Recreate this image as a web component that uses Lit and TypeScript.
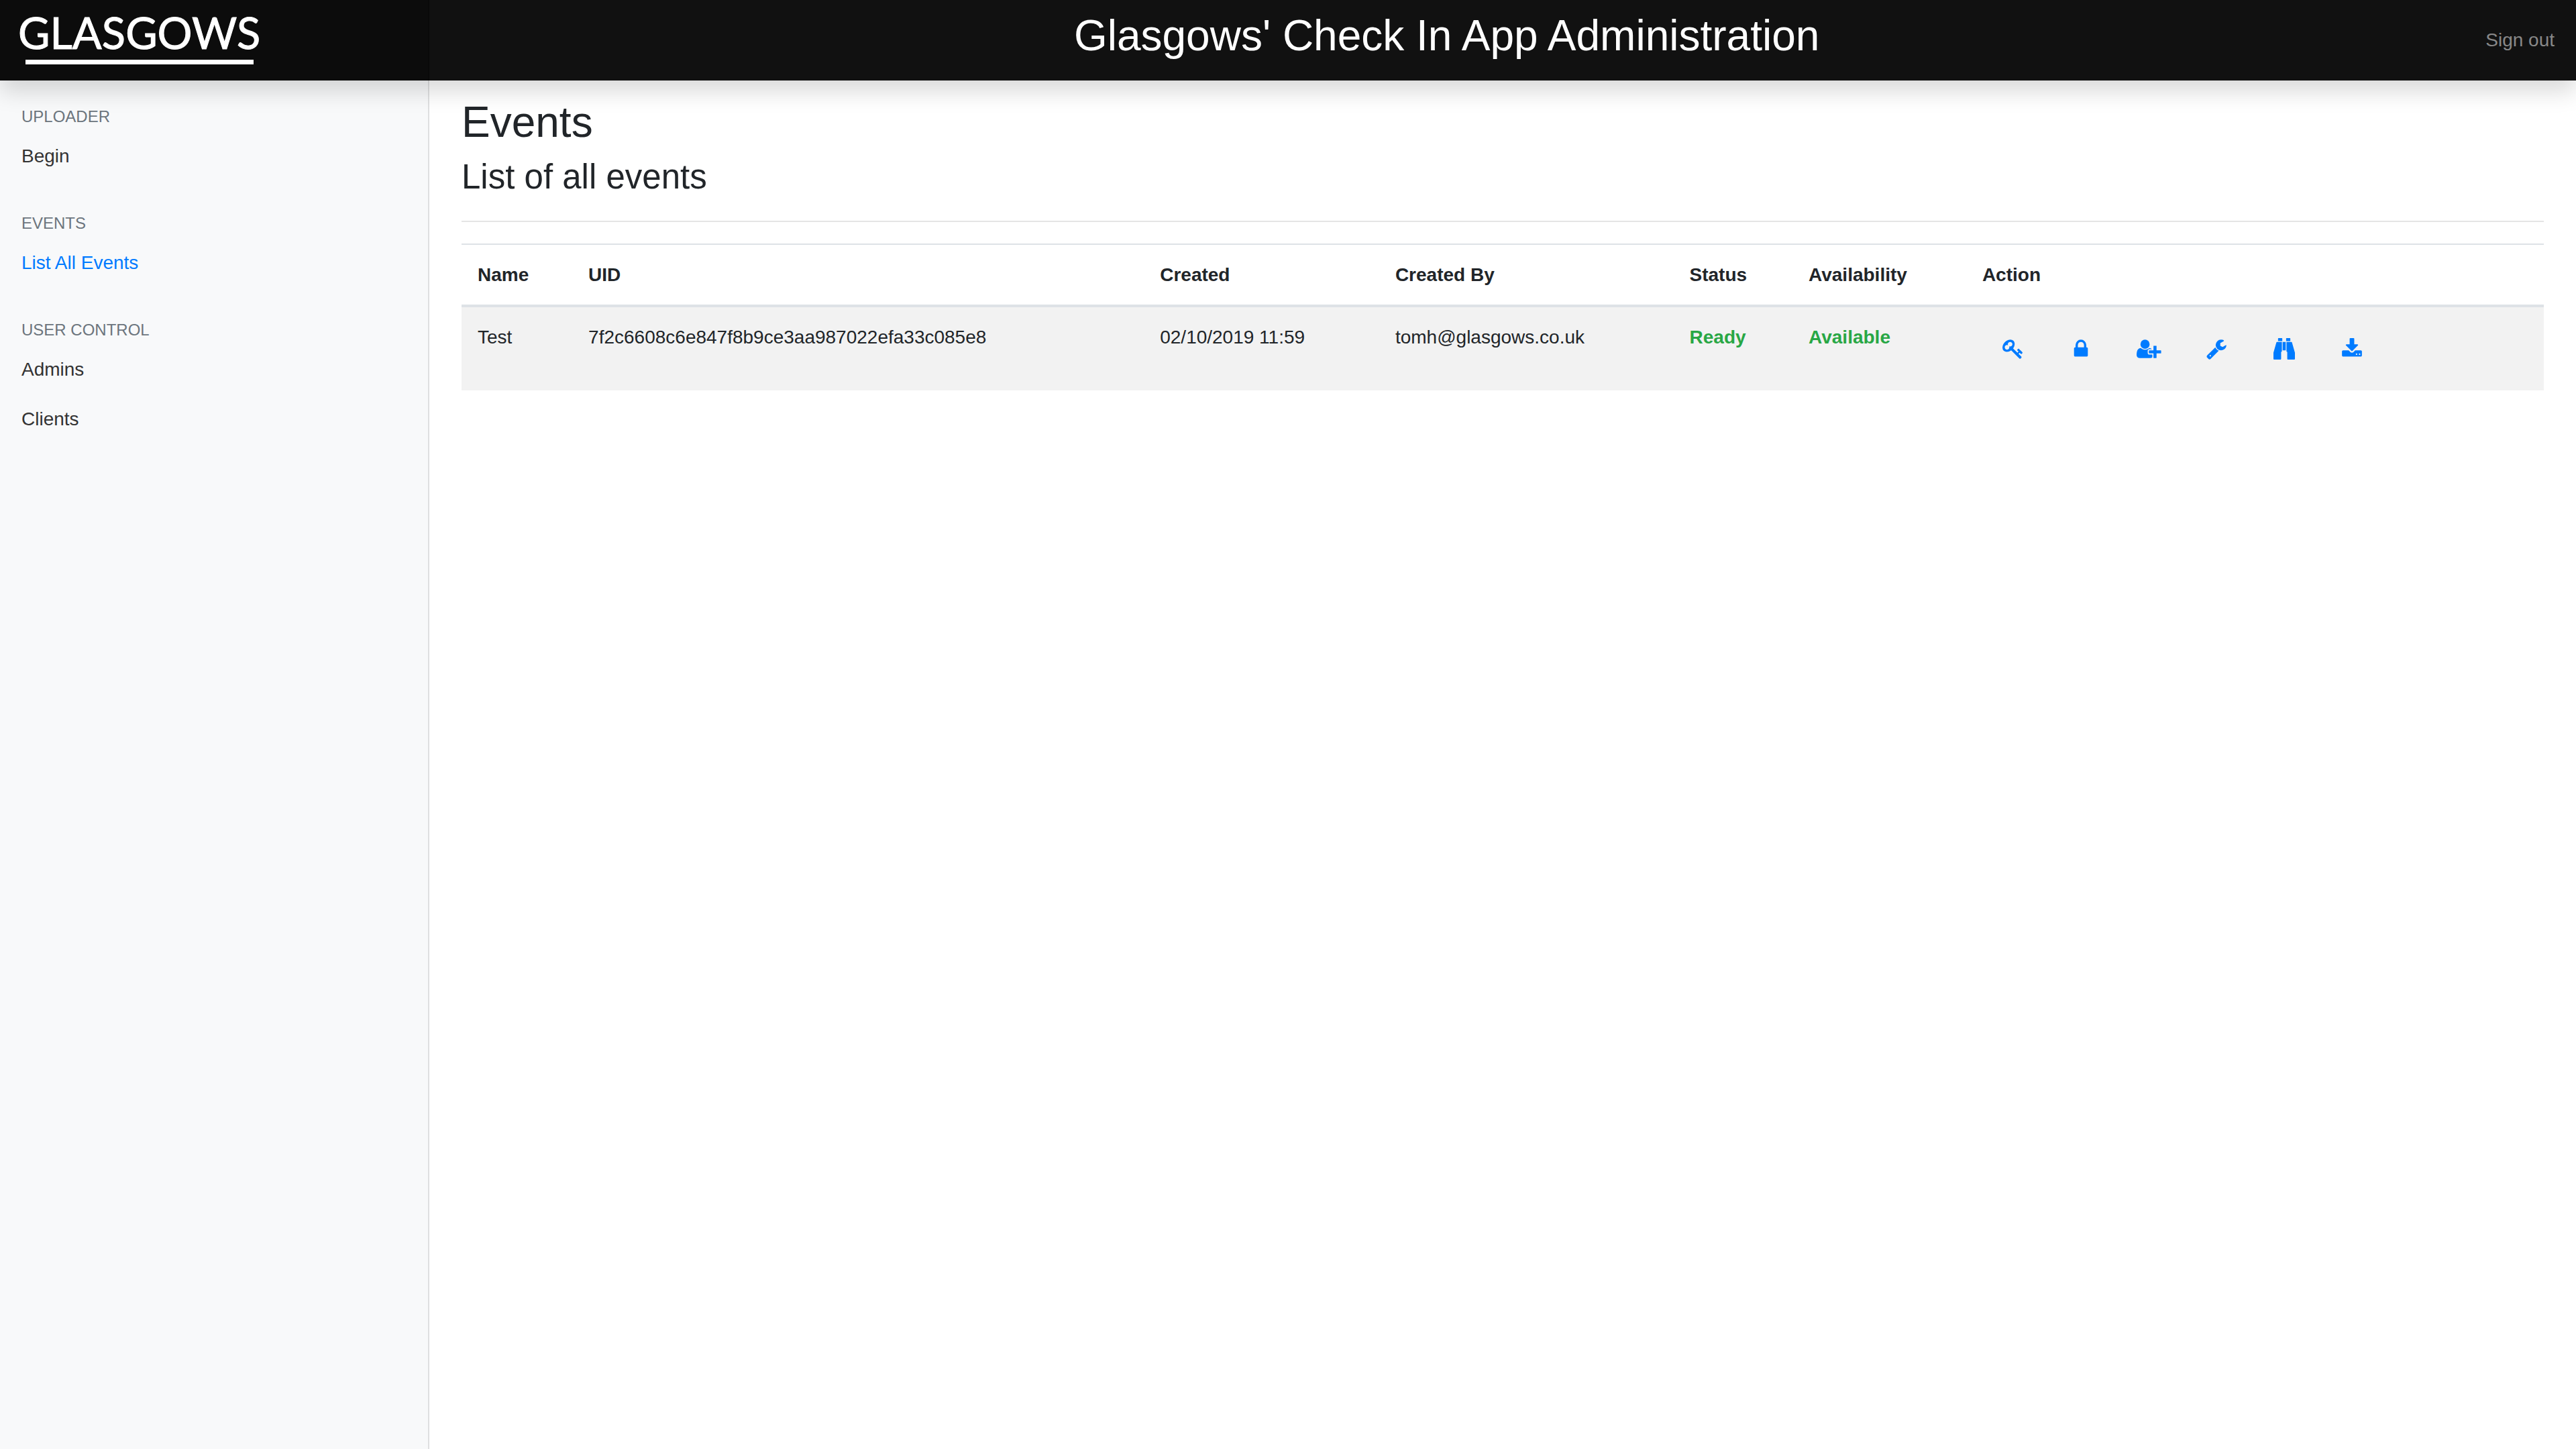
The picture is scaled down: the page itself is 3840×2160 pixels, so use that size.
import { LitElement, html, css, svg } from "lit";
import { customElement } from "lit/decorators.js";

interface NavLink { label: string; active?: boolean; }
interface NavGroup { title: string; links: NavLink[]; }
interface Action { label: string; width: number; path: string; }
interface EventRow {
  name: string; uid: string; created: string; createdBy: string; status: string; availability: string;
}

const NAV: NavGroup[] = [
  { title: "Uploader", links: [{ label: "Begin" }] },
  { title: "Events", links: [{ label: "List All Events", active: true }] },
  { title: "User Control", links: [{ label: "Admins" }, { label: "Clients" }] },
];

const COLUMNS = ["Name", "UID", "Created", "Created By", "Status", "Availability", "Action"];

const EVENTS: EventRow[] = [
  {
    name: "Test",
    uid: "7f2c6608c6e847f8b9ce3aa987022efa33c085e8",
    created: "02/10/2019 11:59",
    createdBy: "tomh@glasgows.co.uk",
    status: "Ready",
    availability: "Available",
  },
];

const ACTIONS: Action[] = [
  {
    label: "Key", width: 1792,
    path: "M832 512q0-80-56-136t-136-56-136 56-56 136q0 42 19 83-41-19-83-19-80 0-136 56t-56 136 56 136 136 56 136-56 56-136q0-42-19-83 41 19 83 19 80 0 136-56t56-136zm851 704q0 17-49 66t-66 49q-9 0-28.5-16t-36.5-33-38.5-40-24.5-26l-96 96 220 220q28 28 28 68 0 42-39 81t-81 39q-40 0-68-28l-671-671q-176 131-365 131-163 0-265.5-102.5t-102.5-265.5q0-160 95-313t248-248 313-95q163 0 265.5 102.5t102.5 265.5q0 189-131 365l355 355 96-96q-3-3-26-24.5t-40-38.5-33-36.5-16-28.5q0-17 49-66t66-49q13 0 23 10 6 6 46 44.5t82 79.5 86.5 86 73 78 28.5 41z",
  },
  {
    label: "Lock", width: 1792,
    path: "M640 768h512v-192q0-106-75-181t-181-75-181 75-75 181v192zm832 96v576q0 40-28 68t-68 28h-960q-40 0-68-28t-28-68v-576q0-40 28-68t68-28h32v-192q0-184 132-316t316-132 316 132 132 316v192h32q40 0 68 28t28 68z",
  },
  {
    label: "Add user", width: 2048,
    path: "M704 896q-159 0-271.500-112.500t-112.500-271.500 112.500-271.500 271.500-112.500 271.500 112.500 112.500 271.500-112.500 271.500-271.500 112.500zm960 128h352q13 0 22.500 9.500t9.500 22.500v192q0 13-9.500 22.500t-22.500 9.500h-352v352q0 13-9.500 22.500t-22.500 9.500h-192q-13 0-22.500-9.500t-9.500-22.500v-352h-352q-13 0-22.500-9.500t-9.500-22.500v-192q0-13 9.500-22.500t22.500-9.500h352v-352q0-13 9.500-22.500t22.500-9.500h192q13 0 22.500 9.500t9.500 22.500v352zm-736 224q0 52 38 90t90 38h256v238q-68 50-171 50h-874q-121 0-194-69t-73-190q0-53 3.500-103.500t14-109 26.500-108.500 43-97.500 62-81 85.500-53.500 111.500-20q19 0 39 17 79 61 154.500 91.500t164.500 30.500 164.500-30.500 154.500-91.500q20-17 39-17 132 0 217 96h-223q-52 0-90 38t-38 90v192z",
  },
  {
    label: "Settings", width: 1792,
    path: "M448 1472q0-26-19-45t-45-19-45 19-19 45 19 45 45 19 45-19 19-45zm644-420l-682 682q-37 37-90 37-52 0-91-37l-106-108q-38-36-38-90 0-53 38-91l681-681q39 98 114.500 173.500t173.500 114.500zm634-435q0 39-23 106-47 134-164.500 217.500t-258.500 83.500q-185 0-316.500-131.500t-131.500-316.500 131.500-316.500 316.500-131.500q58 0 121.500 16.500t107.500 46.500q16 11 16 28t-16 28l-293 169v224l193 107q5-3 79-48.500t135.500-81 70.500-35.500q15 0 23.500 10t8.500 25z",
  },
  {
    label: "View", width: 1792,
    path: "M704 320v768q0 26-19 45t-45 19v576q0 26-19 45t-45 19h-512q-26 0-45-19t-19-45v-512l249-873q7-23 31-23h424zM1024 320v704h-256v-704h256zM1792 1216v512q0 26-19 45t-45 19h-512q-26 0-45-19t-19-45v-576q-26 0-45-19t-19-45v-768h424q24 0 31 23zM736 32v224h-352v-224q0-14 9-23t23-9h288q14 0 23 9t9 23zM1408 32v224h-352v-224q0-14 9-23t23-9h288q14 0 23 9t9 23z",
  },
  {
    label: "Download", width: 1792,
    path: "M1344 1344q0-26-19-45t-45-19-45 19-19 45 19 45 45 19 45-19 19-45zm256 0q0-26-19-45t-45-19-45 19-19 45 19 45 45 19 45-19 19-45zm128-224v320q0 40-28 68t-68 28h-1472q-40 0-68-28t-28-68v-320q0-40 28-68t68-28h465l135 136q58 56 136 56t136-56l136-136h464q40 0 68 28t28 68zm-325-569q17 41-14 70l-448 448q-18 19-45 19t-45-19l-448-448q-31-29-14-70 17-39 59-39h256v-448q0-26 19-45t45-19h256q26 0 45 19t19 45v448h256q42 0 59 39z",
  },
];

@customElement("app-root")
export class AppRoot extends LitElement {
  static styles = css`
    :host {
      display: flex;
      flex-direction: column;
      min-height: 100vh;
      background: #fff;
      color: #212529;
      font-family: "Liberation Sans", Arial, sans-serif;
      font-size: 28px;
      line-height: 42px;
    }
    *, *::before, *::after { box-sizing: border-box; }
    a { color: #007bff; text-decoration: none; }

    .topbar {
      position: sticky;
      top: 0;
      z-index: 1;
      display: flex;
      align-items: stretch;
      height: 120px;
      background: #111;
      box-shadow: 0 16px 32px rgba(0, 0, 0, 0.15);
    }
    .brand {
      flex: 0 0 calc(100% / 6);
      display: flex;
      align-items: center;
      padding: 0 30px;
      background: rgba(0, 0, 0, 0.25);
      box-shadow: inset -2px 0 0 rgba(0, 0, 0, 0.25);
    }
    .logo { display: block; width: 356px; height: 72px; overflow: visible; }
    .logo-text {
      font-family: Lato, "Liberation Sans", sans-serif;
      font-size: 65px;
      fill: #fff;
      stroke: #fff;
      stroke-width: 1px;
    }
    .title {
      flex: 1;
      margin: 0;
      padding-top: 15px;
      font-size: 64px;
      font-weight: 400;
      line-height: 77px;
      color: #fff;
      text-align: center;
    }
    .signout {
      align-self: center;
      padding: 0 32px;
      color: rgba(255, 255, 255, 0.5);
    }

    .body { flex: 1; display: flex; }
    .sidebar {
      flex: 0 0 calc(100% / 6);
      display: flex;
      flex-direction: column;
      gap: 48px;
      padding-top: 39px;
      background: #f8f9fa;
      box-shadow: inset -2px 0 0 rgba(0, 0, 0, 0.1);
    }
    .group-title {
      margin: 0 0 8px;
      padding: 0 32px;
      font-size: 24px;
      font-weight: 400;
      line-height: 29px;
      color: #6c757d;
      text-transform: uppercase;
    }
    .links { margin: 0; padding: 0; list-style: none; }
    .link { display: block; padding: 16px 32px; color: #333; }
    .link.active { color: #007bff; }

    .main { flex: 1; min-width: 0; padding: 24px 48px; }
    .heading { margin: 0 0 4px; font-size: 64px; font-weight: 400; line-height: 77px; }
    .subheading { margin: 0; font-size: 51px; font-weight: 400; line-height: 77px; }
    .rule { margin: 27px 0 32px; border: 0; border-top: 2px solid rgba(0, 0, 0, 0.1); }

    .events { width: 100%; border-spacing: 0; line-height: 41px; }
    .events th, .events td { padding: 24px; text-align: left; vertical-align: top; }
    .events th { border-top: 2px solid #dee2e6; border-bottom: 4px solid #dee2e6; font-weight: 700; }
    .events td { background: #f2f2f2; }
    .events .good { color: #28a745; font-weight: 700; }
    .actions { display: flex; gap: 8px; padding-right: 2px; }
    .action {
      display: flex;
      align-items: center;
      justify-content: center;
      width: 93px;
      height: 76px;
      color: #007bff;
    }
    .icon { display: block; flex: none; height: 32px; fill: currentColor; }
  `;

  private icon(a: Action) {
    return html`<svg class="icon" viewBox="0 0 ${a.width} 1792" aria-hidden="true">${svg`<path d=${a.path}></path>`}</svg>`;
  }

  render() {
    return html`
      <header class="topbar">
        <a class="brand" href="#" aria-label="Glasgows">
          <svg class="logo" viewBox="0 0 356 72" role="img" aria-label="Glasgows">
            <text class="logo-text" x="-3" y="49">GLASGOWS</text>
            <rect x="8" y="65" width="340" height="7" fill="#fff"></rect>
          </svg>
        </a>
        <h1 class="title">Glasgows' Check In App Administration</h1>
        <a class="signout" href="#">Sign out</a>
      </header>
      <div class="body">
        <nav class="sidebar">
          ${NAV.map((g) => html`
            <section>
              <h2 class="group-title">${g.title}</h2>
              <ul class="links">
                ${g.links.map((l) => html`<li><a class="link ${l.active ? "active" : ""}" href="#">${l.label}</a></li>`)}
              </ul>
            </section>`)}
        </nav>
        <main class="main">
          <h2 class="heading">Events</h2>
          <h3 class="subheading">List of all events</h3>
          <hr class="rule" />
          <table class="events">
            <thead><tr>${COLUMNS.map((c) => html`<th scope="col">${c}</th>`)}</tr></thead>
            <tbody>
              ${EVENTS.map((e) => html`
                <tr>
                  <td>${e.name}</td>
                  <td>${e.uid}</td>
                  <td>${e.created}</td>
                  <td>${e.createdBy}</td>
                  <td class="good">${e.status}</td>
                  <td class="good">${e.availability}</td>
                  <td>
                    <div class="actions">
                      ${ACTIONS.map((a) => html`<a class="action" href="#" aria-label=${a.label}>${this.icon(a)}</a>`)}
                    </div>
                  </td>
                </tr>`)}
            </tbody>
          </table>
        </main>
      </div>
    `;
  }
}
